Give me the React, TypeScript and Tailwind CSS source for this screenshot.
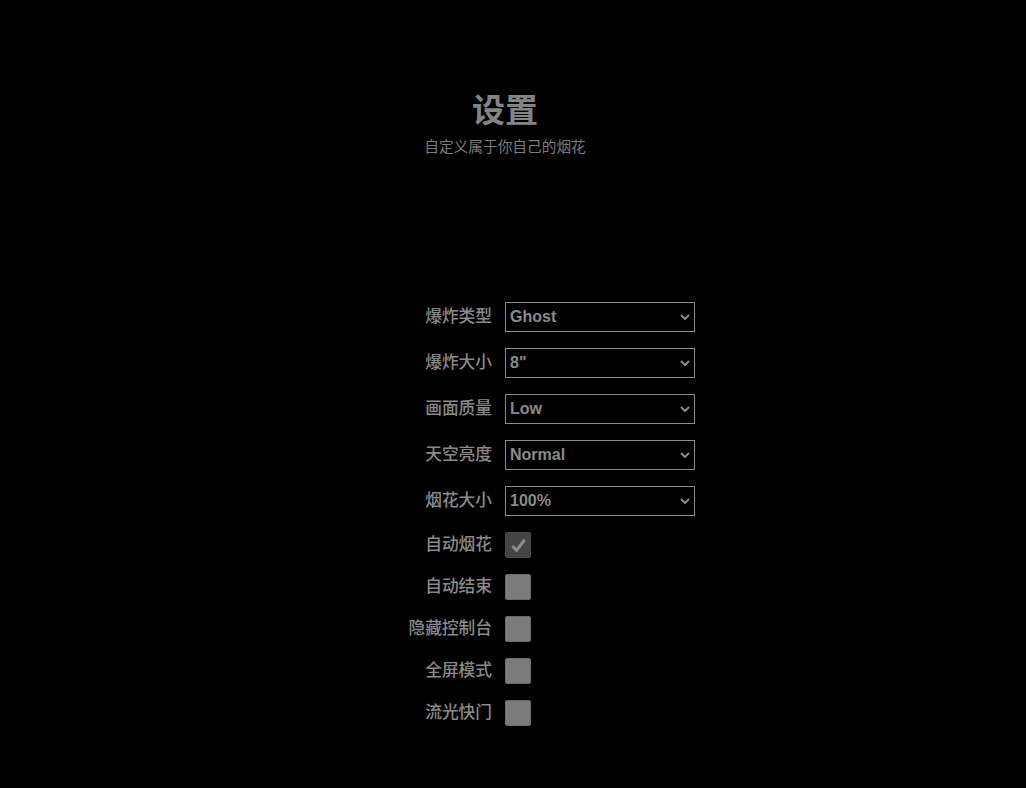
import { useState } from "react";

const selects = [
  { label: "爆炸类型", value: "Ghost", options: ["Random", "Crysanthemum", "Ghost", "Palm", "Ring"] },
  { label: "爆炸大小", value: '8"', options: ['3"', '4"', '6"', '8"', '12"', '16"'] },
  { label: "画面质量", value: "Low", options: ["Low", "Normal", "High"] },
  { label: "天空亮度", value: "Normal", options: ["None", "Dim", "Normal"] },
  { label: "烟花大小", value: "100%", options: ["50%", "62%", "75%", "90%", "100%"] },
];

const toggles = [
  { label: "自动烟花", checked: true },
  { label: "自动结束", checked: false },
  { label: "隐藏控制台", checked: false },
  { label: "全屏模式", checked: false },
  { label: "流光快门", checked: false },
];

function Chevron() {
  return (
    <svg viewBox="0 0 10 6" className="pointer-events-none absolute right-[5px] top-1/2 h-[6px] w-[10px] -translate-y-1/2">
      <path d="M1 1l4 4 4-4" fill="none" stroke="#8a8a8a" strokeWidth="2" />
    </svg>
  );
}

export default function App() {
  const [vals, setVals] = useState(selects.map((s) => s.value));
  const [checks, setChecks] = useState(toggles.map((t) => t.checked));

  return (
    <div
      className="min-h-[788px] w-full bg-black pr-4 text-[#8a8a8a]"
      style={{ fontFamily: '"Liberation Sans", "Noto Sans CJK SC", sans-serif' }}
    >
      {/* heading */}
      <div className="flex flex-col items-center pt-[89px]">
        <h1 className="text-[33px] font-bold leading-[44px] text-[#848484]">设置</h1>
        <p className="mt-[4px] text-[14.7px] leading-[20px] text-[#7c7c7c]">自定义属于你自己的烟花</p>
      </div>

      {/* dropdowns */}
      <div className="mt-[145px] flex flex-col gap-4">
        {selects.map((s, i) => (
          <div key={s.label} className="flex h-[30px] items-center">
            <label className="w-1/2 pr-[13px] text-right text-[16.7px] font-medium">{s.label}</label>
            <div className="w-1/2">
              <div className="relative w-[190px]">
                <select
                  value={vals[i]}
                  onChange={(e) => setVals(vals.map((v, j) => (j === i ? e.target.value : v)))}
                  className="h-[30px] w-full appearance-none border border-[#8a8a8a] bg-black pl-1 text-[16px] font-bold text-[#8a8a8a] outline-none"
                >
                  {s.options.map((o) => (
                    <option key={o}>{o}</option>
                  ))}
                </select>
                <Chevron />
              </div>
            </div>
          </div>
        ))}
      </div>

      {/* toggles */}
      <div className="mt-4 flex flex-col gap-4">
        {toggles.map((t, i) => (
          <div key={t.label} className="flex h-[26px] items-center">
            <label className="w-1/2 pr-[13px] text-right text-[16.7px] font-medium">{t.label}</label>
            <div className="w-1/2">
              <button
                onClick={() => setChecks(checks.map((c, j) => (j === i ? !c : c)))}
                className={
                  checks[i]
                    ? "flex h-[26px] w-[26px] items-center justify-center rounded-[2px] border border-[#4a4a4a] bg-[#444]"
                    : "flex h-[26px] w-[26px] items-center justify-center rounded-[2px] border border-[#6a6a6a] bg-[#7b7b7b]"
                }
              >
                {checks[i] && (
                  <svg viewBox="0 0 20 20" className="h-[19px] w-[19px]">
                    <path d="M3.5 10.5l4.5 4.5 8.5-11" fill="none" stroke="#8c8c8c" strokeWidth="3.2" strokeLinejoin="round" />
                  </svg>
                )}
              </button>
            </div>
          </div>
        ))}
      </div>
    </div>
  );
}
